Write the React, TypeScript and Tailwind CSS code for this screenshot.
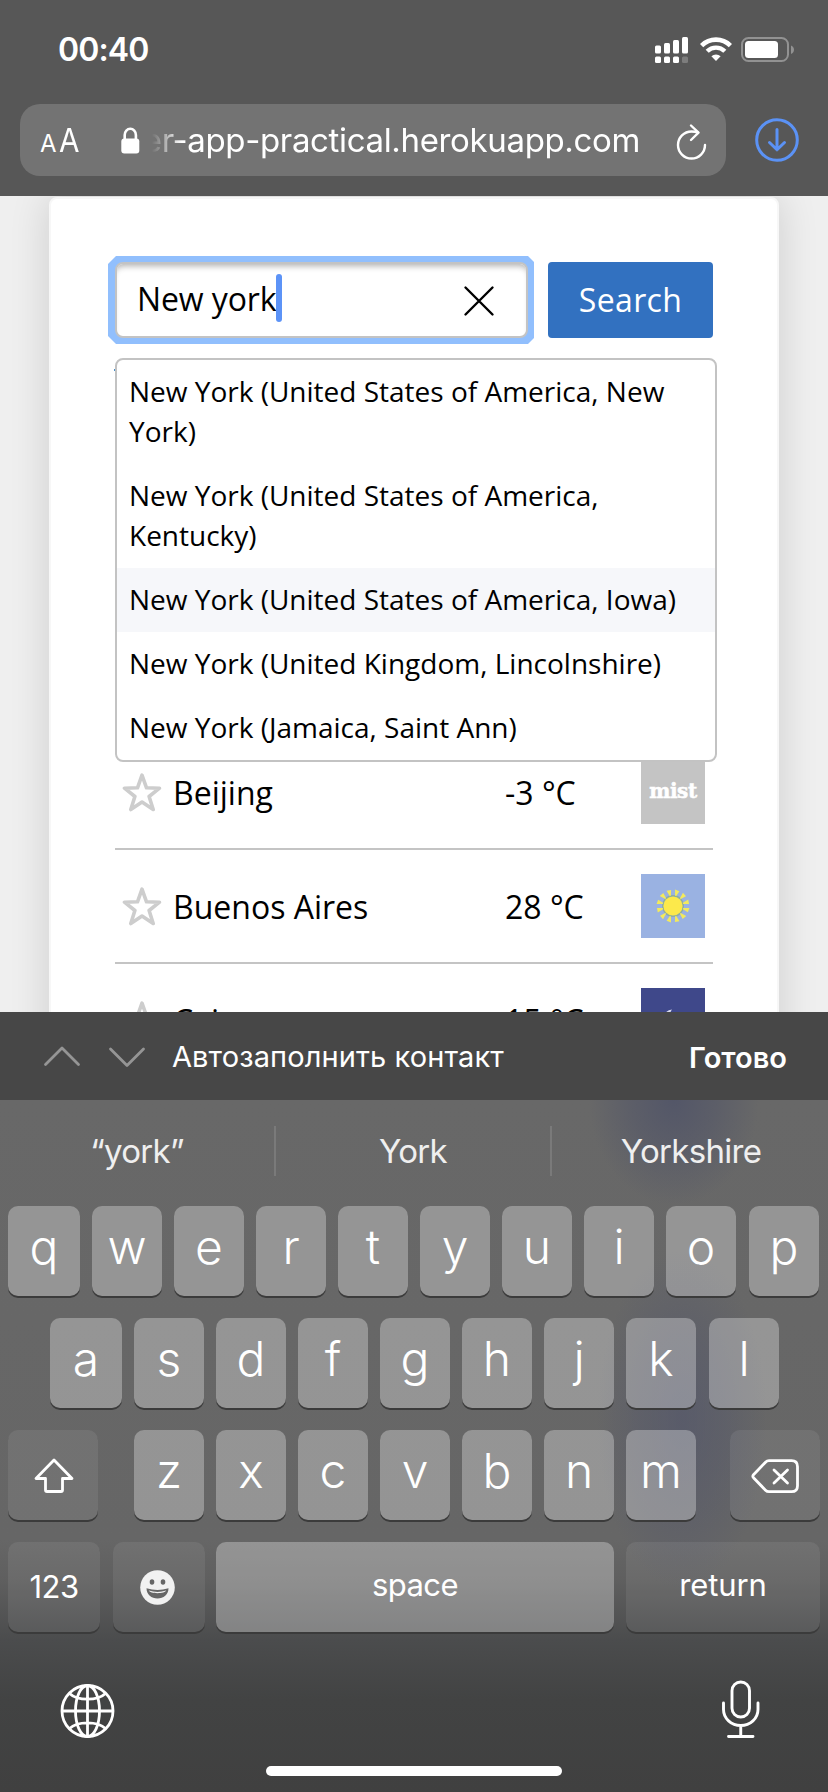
import type { ReactNode } from "react";

function SignalIcon() {
  return (
    <svg width="34" height="27" viewBox="0 0 34 27" fill="#fff">
      <rect x="0" y="8.5" width="6" height="8" rx="1.5" />
      <rect x="9" y="6" width="6" height="10.5" rx="1.5" />
      <rect x="18" y="3" width="6" height="13.5" rx="1.5" />
      <rect x="27" y="0" width="6" height="16.5" rx="1.5" />
      <rect x="0" y="19.5" width="6" height="6.5" rx="1.5" />
      <rect x="9" y="19.5" width="6" height="6.5" rx="1.5" />
      <rect x="18" y="19.5" width="6" height="6.5" rx="1.5" />
      <rect x="27" y="19.5" width="6" height="6.5" rx="1.5" fill="#7d7d7d" />
    </svg>
  );
}

function WifiIcon() {
  return (
    <svg width="32" height="24" viewBox="0 0 32 24" fill="none" stroke="#fff">
      <path d="M1.6 8.6a20.4 20.4 0 0 1 28.8 0" strokeWidth="4.6" />
      <path d="M7.2 14.2a12.5 12.5 0 0 1 17.6 0" strokeWidth="4.4" />
      <path d="M16 24l-4.6-4.7a6.6 6.6 0 0 1 9.2 0z" fill="#fff" stroke="none" />
    </svg>
  );
}

function BatteryIcon() {
  return (
    <svg width="53" height="26" viewBox="0 0 53 26">
      <rect x="1" y="1" width="46" height="23" rx="6.5" fill="none" stroke="#929292" strokeWidth="2" />
      <rect x="4" y="4" width="33" height="17" rx="3.5" fill="#fff" />
      <path d="M50 8.5c4 1.6 4 6.9 0 8.5z" fill="#929292" />
    </svg>
  );
}

function LockIcon() {
  return (
    <svg width="19" height="27" viewBox="0 0 19 27">
      <path d="M3.7 12.5V8a5.6 6.2 0 0 1 11.2 0v4.5" fill="none" stroke="#fff" strokeWidth="2.6" />
      <rect x="0.3" y="11.5" width="18" height="15" rx="3" fill="#fff" />
    </svg>
  );
}

function ReloadIcon() {
  return (
    <svg width="32" height="38" viewBox="0 0 32 38" fill="none" stroke="#fff" strokeWidth="2.4" strokeLinecap="round" strokeLinejoin="round">
      <path d="M29 22a13.5 13.5 0 1 1-13.500-13.500c2.500 0 5 .5 6.500 1.200" />
      <path d="M15 2.500l7.500 7.200-7.500 7.300" />
    </svg>
  );
}

function DownloadIcon() {
  return (
    <svg width="44" height="44" viewBox="0 0 44 44" fill="none" stroke="#5b92f5" strokeWidth="3" strokeLinecap="round" strokeLinejoin="round">
      <circle cx="22" cy="22" r="20.3" />
      <path d="M22 11.500v20M14.500 24.500L22 31.800l7.500-7.300" />
    </svg>
  );
}

function StarIcon() {
  return (
    <svg width="40" height="40" viewBox="0 0 40 40" fill="none" stroke="#cdcdcd" strokeWidth="3.6" strokeLinejoin="round">
      <path d="M20 3.200l4.500 12.600 13 .4-10.400 8.300 4.100 13L20 30l-11.200 7.500 4.100-13L2.500 16.200l13-.4z" />
    </svg>
  );
}

function SunTile() {
  const rays = Array.from({ length: 12 }, (_, i) => i * 30 + 15);
  return (
    <svg width="64" height="64" viewBox="0 0 64 64" className="bg-[#9ab2e2]">
      <circle cx="32" cy="32" r="11" fill="#8fae9f" />
      <circle cx="32" cy="32" r="9.6" fill="#fce94b" />
      {rays.map((a) => (
        <path key={a} d="M29.700 15.600l4.600.4-1.700 5.600h-1.200z" fill="#f3ea5c" transform={`rotate(${a} 32 32)`} />
      ))}
    </svg>
  );
}

function NightTile() {
  return (
    <svg width="64" height="64" viewBox="0 0 64 64" className="bg-[#3f488a]">
      <path d="M31 21.500a10 10 0 1 0 10 14a9 9 0 0 1-10-14z" fill="#d9dcf0" />
    </svg>
  );
}

function MistTile() {
  return (
    <div className="flex size-16 items-center justify-center bg-[#c4c4c4] pb-0.5 font-['DejaVu_Serif',serif] text-[20px] leading-none font-bold tracking-[-0.5px] text-white [-webkit-text-stroke:0.5px_white]">
      mist
    </div>
  );
}

function CityRow({ city, temp, children }: { city: string; temp: string; children: ReactNode }) {
  return (
    <li className="flex h-[114px] items-center border-b-2 border-[#c4c4c4] pr-2 pl-[7px]">
      <StarIcon />
      <span className="ml-[11px] w-[332px] pt-0.5 text-[32px]">{city}</span>
      <span className="flex-1 pt-0.5 text-[32px]">{temp}</span>
      {children}
    </li>
  );
}

const suggestions = [
  "New York (United States of America, New York)",
  "New York (United States of America, Kentucky)",
  "New York (United States of America, Iowa)",
  "New York (United Kingdom, Lincolnshire)",
  "New York (Jamaica, Saint Ann)",
];

function SearchBox() {
  return (
    <div className="relative">
      <div className="flex h-[76px] justify-between">
        <div className="-my-1.5 -mr-1.5 -ml-[7px] w-[426px] bg-[#91bffd] py-1.5 pr-1.5 pl-[7px] [clip-path:polygon(8px_0,calc(100%-6px)_0,100%_6px,100%_calc(100%-6px),calc(100%-6px)_100%,8px_100%,0_calc(100%-8px),0_8px)]">
          <div className="flex h-[76px] items-center rounded-lg border-2 border-[#c3c3c3] bg-white pr-[31px] pl-5 shadow-[inset_0_6px_6px_-4px_#b0b0b0]">
            <span className="pb-[3px] text-[32px] tracking-[-0.1px]">New york</span>
            <span className="mb-1 -ml-px h-12 w-1.5 rounded-full bg-[#5c93f7]" />
            <svg className="mt-0.5 ml-auto" width="32" height="32" viewBox="0 0 32 32" stroke="#000" strokeWidth="2.4" strokeLinecap="round">
              <path d="M2.500 2.500l27 27M29.500 2.500l-27 27" />
            </svg>
          </div>
        </div>
        <button className="w-[165px] rounded bg-[#3271c0] text-[32px] tracking-[0.35px] text-white">Search</button>
      </div>
      <ul className="absolute top-24 left-0 z-10 w-[602px] overflow-hidden rounded-lg border-2 border-[#c3c3c3] bg-white text-[28px] leading-10">
        {suggestions.map((s, i) => (
          <li key={s} className={i === 2 ? "bg-[#f6f7fa] px-3 pt-[11px] pb-[13px]" : "px-3 pt-[11px] pb-[13px]"}>
            {s}
          </li>
        ))}
      </ul>
    </div>
  );
}

const keyBase = "flex h-[90px] items-center justify-center rounded-[10px] shadow-[0_2px_0_#3b3b3b]";
const letterKey = `${keyBase} bg-white/30 pb-2 text-[48px] leading-none font-[330]`;

function LetterRow({ letters, full = true }: { letters: string; full?: boolean }) {
  return (
    <div className="flex gap-3">
      {letters.split("").map((c, i) => (
        <div
          key={c}
          className={`${letterKey} ${full && i === 0 ? "w-[72px]" : "w-[70px]"} ${full && i === letters.length - 1 ? "ml-px" : ""}`}
        >
          {c}
        </div>
      ))}
    </div>
  );
}

function Keyboard() {
  return (
    <div className="flex h-[692px] flex-col bg-[radial-gradient(85px_105px_at_674px_0px,rgba(78,82,104,0.8),rgba(78,82,104,0.45)_50%,transparent),radial-gradient(85px_170px_at_682px_320px,rgba(80,84,108,0.6),rgba(80,84,108,0.35)_50%,transparent),linear-gradient(#686868_0px,#666666_440px,#5f5f5f_480px,#4b4c4d_540px,#424343_600px,#404040_100%)] text-white">
      <div className="flex h-[102px] items-center text-[33px] tracking-[-0.7px] text-[#efefef]">
        <span className="w-[274px] pt-px text-center">“york”</span>
        <span className="h-[50px] w-0.5 bg-[#7a7a7a]" />
        <span className="w-[274px] pt-px text-center">York</span>
        <span className="h-[50px] w-0.5 bg-[#7a7a7a]" />
        <span className="flex-1 pt-px pl-0.5 text-center">Yorkshire</span>
      </div>
      <div className="mt-1 flex flex-col gap-[22px] px-2">
        <LetterRow letters="qwertyuiop" />
        <div className="pl-[42px]">
          <LetterRow letters="asdfghjkl" />
        </div>
        <div className="flex">
          <div className={`${keyBase} mr-9 w-[90px] bg-white/7`}>
            <svg className="mt-0.5 ml-0.5" width="42" height="38" viewBox="0 0 42 38" fill="none" stroke="#fff" strokeWidth="2.8" strokeLinejoin="round">
              <path d="M21 3L3 21.500h9.500V33q0 1.500 1.500 1.500h14q1.500 0 1.500-1.500V21.500H39z" />
            </svg>
          </div>
          <LetterRow letters="zxcvbnm" full={false} />
          <div className={`${keyBase} ml-auto w-[90px] bg-white/7`}>
            <svg className="mt-0.5" width="50" height="38" viewBox="0 0 50 38" fill="none" stroke="#fff" strokeWidth="2.8" strokeLinecap="round" strokeLinejoin="round">
              <path d="M19 3.700h22.500q6 0 6 6v19q0 6-6 6H19q-2 0-3.500-1.500L3.500 20.700q-1.300-1.500 0-3L15.500 5.200Q17 3.700 19 3.700z" />
              <path d="M24 13l13.500 13M37.500 13L24 26" />
            </svg>
          </div>
        </div>
        <div className="flex text-[31px]">
          <div className={`${keyBase} mr-[13px] w-[92px] bg-white/7 tracking-[-0.6px]`}>123</div>
          <div className={`${keyBase} mr-[11px] w-[92px] bg-white/7 pr-[3px]`}>
            <svg width="35" height="35" viewBox="0 0 35 35">
              <circle cx="17.5" cy="17.5" r="17.3" fill="#f1f1f1" />
              <ellipse cx="12" cy="12" rx="2.3" ry="2.7" fill="#666" />
              <ellipse cx="23" cy="12" rx="2.3" ry="2.7" fill="#666" />
              <path d="M6.500 18.200q11 3.600 22 0c0 6.500-5 10.300-11 10.300s-11-3.800-11-10.300z" fill="#666" />
              <path d="M8.800 20.600q8.700 2.700 17.400 0c-.8 3.400-16.600 3.400-17.400 0z" fill="#f1f1f1" />
            </svg>
          </div>
          <div className={`${keyBase} mr-3 w-[398px] bg-white/30 pb-1 tracking-[-0.6px]`}>space</div>
          <div className={`${keyBase} w-[194px] bg-white/7 pb-1 tracking-[-0.1px]`}>return</div>
        </div>
      </div>
      <div className="mt-[47px] flex items-center justify-between pr-[67px] pl-[60px]">
        <svg className="mt-1" width="55" height="56" viewBox="0 0 55 56" fill="none" stroke="#fff" strokeWidth="2.8">
          <circle cx="27.5" cy="28" r="25.5" />
          <ellipse cx="27.5" cy="28" rx="12" ry="25.5" />
          <path d="M27.500 2.500v51M2 28h51M9.500 10.500c8 7.500 28 7.500 36 0M9.500 45.500c8-7.500 28-7.500 36 0" />
        </svg>
        <svg width="40" height="60" viewBox="0 0 40 60" fill="none" stroke="#fff" strokeWidth="2.9" strokeLinecap="round">
          <rect x="11" y="3" width="17.5" height="35" rx="8.75" />
          <path d="M2.500 24v6.500a17.200 16 0 0 0 34.500 0V24M19.750 46.500V57M7.500 57.500h24.500" />
        </svg>
      </div>
      <div className="mx-auto mt-auto mb-4 h-2.5 w-[296px] rounded-full bg-white" />
    </div>
  );
}

export default function App() {
  return (
    <div className="flex h-[1792px] w-[828px] flex-col overflow-hidden bg-[#efefef] font-[Inter,sans-serif]">
      <header className="h-[196px] bg-[#575757] text-white">
        <div className="flex h-[104px] items-start pt-[37px] pr-[34px] pl-[58px]">
          <span className="text-[32px] leading-[26px] font-semibold tracking-[-0.9px]">00:40</span>
          <span className="ml-auto flex items-start">
            <SignalIcon />
            <span className="ml-[11px]">
              <WifiIcon />
            </span>
            <span className="ml-[9px]">
              <BatteryIcon />
            </span>
          </span>
        </div>
        <div className="flex items-center pl-5">
          <div className="flex h-[72px] w-[706px] items-center rounded-[20px] bg-[#737373] pr-[18px] pl-5">
            <span className="flex w-[81px] items-baseline pt-0.5">
              <span className="mr-[2px] text-[24px]">A</span>
              <span className="inline-block origin-left scale-x-90 text-[33px]">A</span>
            </span>
            <LockIcon />
            <span className="ml-3 flex w-[488px] justify-end overflow-hidden pt-0.5 text-[33px] tracking-[-0.35px] whitespace-nowrap [mask-image:linear-gradient(90deg,transparent_0px,#000_30px)]">
              er-app-practical.herokuapp.com
            </span>
            <span className="mt-1 ml-auto">
              <ReloadIcon />
            </span>
          </div>
          <span className="ml-[29px]">
            <DownloadIcon />
          </span>
        </div>
      </header>

      <main className="h-[816px] overflow-hidden font-['Open_Sans',sans-serif] text-black">
        <div className="mx-auto mt-px h-[1000px] w-[730px] rounded-lg border-2 border-[#f7f7f7] bg-white px-16 pt-[63px] shadow-[0_0_40px_rgba(0,0,0,0.14)]">
          <SearchBox />
          <div className="mt-[31px] -ml-px h-0.5 w-24 bg-[#4a90c8]" />
          <ul className="mt-[365px]">
            <CityRow city="Beijing" temp="-3 °C">
              <MistTile />
            </CityRow>
            <CityRow city="Buenos Aires" temp="28 °C">
              <SunTile />
            </CityRow>
            <CityRow city="Cairo" temp="15 °C">
              <NightTile />
            </CityRow>
          </ul>
        </div>
      </main>

      <div className="flex h-[88px] items-center bg-[#474747] pr-[41px] pl-[43px] text-[29px] text-white">
        <svg width="38" height="24" viewBox="0 0 38 24" fill="none" stroke="#959595" strokeWidth="2.8" strokeLinecap="round" strokeLinejoin="round">
          <path d="M2.500 20.500L19 4l16.500 16.500" />
        </svg>
        <svg className="ml-[27px]" width="38" height="24" viewBox="0 0 38 24" fill="none" stroke="#959595" strokeWidth="2.8" strokeLinecap="round" strokeLinejoin="round">
          <path d="M2.500 5L19 21.500 35.500 5" />
        </svg>
        <span className="ml-[26px] pt-px tracking-[0.1px]">Автозаполнить контакт</span>
        <span className="ml-auto pt-[3px] font-semibold">Готово</span>
      </div>

      <Keyboard />
    </div>
  );
}
